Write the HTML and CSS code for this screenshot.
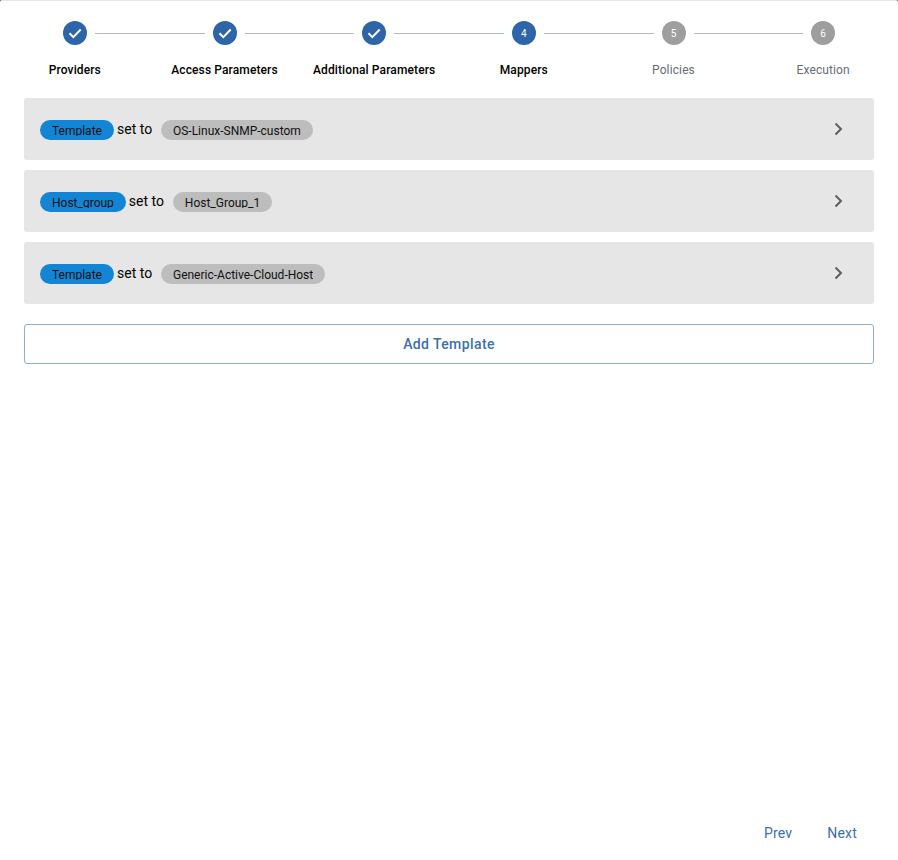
FILE: index.html
```html
<!DOCTYPE html>
<html lang="en">
<head>
<meta charset="utf-8">
<title>Wizard</title>
<link rel="stylesheet" href="styles.css">
</head>
<body>
<main class="wizard">
  <ol class="stepper">
    <li class="step done">
      <div class="track"><span class="line none"></span><span class="dot"><svg viewBox="0 0 24 24" class="check"><path d="M6.5 12.3l3.8 3.8 7.4-7.6"/></svg></span><span class="line"></span></div>
      <span class="label">Providers</span>
    </li>
    <li class="step done">
      <div class="track"><span class="line"></span><span class="dot"><svg viewBox="0 0 24 24" class="check"><path d="M6.5 12.3l3.8 3.8 7.4-7.6"/></svg></span><span class="line"></span></div>
      <span class="label">Access Parameters</span>
    </li>
    <li class="step done">
      <div class="track"><span class="line"></span><span class="dot"><svg viewBox="0 0 24 24" class="check"><path d="M6.5 12.3l3.8 3.8 7.4-7.6"/></svg></span><span class="line"></span></div>
      <span class="label">Additional Parameters</span>
    </li>
    <li class="step done">
      <div class="track"><span class="line"></span><span class="dot">4</span><span class="line"></span></div>
      <span class="label">Mappers</span>
    </li>
    <li class="step">
      <div class="track"><span class="line"></span><span class="dot">5</span><span class="line"></span></div>
      <span class="label">Policies</span>
    </li>
    <li class="step">
      <div class="track"><span class="line"></span><span class="dot">6</span><span class="line none"></span></div>
      <span class="label">Execution</span>
    </li>
  </ol>

  <section class="list">
    <div class="card">
      <div class="rule"><span class="pill key"><span class="pill-text">Template</span></span><span class="setto">set to</span><span class="pill val"><span class="pill-text">OS-Linux-SNMP-custom</span></span></div>
      <svg class="chev" viewBox="0 0 24 24"><path d="M9.5 6.5l5.5 5.5-5.5 5.5"/></svg>
    </div>
    <div class="card">
      <div class="rule"><span class="pill key"><span class="pill-text">Host_group</span></span><span class="setto">set to</span><span class="pill val"><span class="pill-text">Host_Group_1</span></span></div>
      <svg class="chev" viewBox="0 0 24 24"><path d="M9.5 6.5l5.5 5.5-5.5 5.5"/></svg>
    </div>
    <div class="card">
      <div class="rule"><span class="pill key"><span class="pill-text">Template</span></span><span class="setto">set to</span><span class="pill val"><span class="pill-text">Generic-Active-Cloud-Host</span></span></div>
      <svg class="chev" viewBox="0 0 24 24"><path d="M9.5 6.5l5.5 5.5-5.5 5.5"/></svg>
    </div>
    <button class="add">Add Template</button>
  </section>

  <footer class="nav">
    <a class="navlink">Prev</a>
    <a class="navlink">Next</a>
  </footer>
</main>
</body>
</html>
```

FILE: styles.css
```css
* { box-sizing: border-box; }
html, body { margin: 0; height: 100%; background: #2b4a6f; }
body { font-family: Roboto, "Liberation Sans", sans-serif; overflow: hidden; }

.wizard {
  height: 860px;
  display: flex;
  flex-direction: column;
  background: #fff;
  border-top: 1px solid #e3e6ea;
  border-radius: 2px 2px 0 0;
}

.stepper {
  list-style: none;
  margin: 0;
  padding: 20px 0 0;
  display: grid;
  grid-template-columns: repeat(6, 1fr);
}
.step { display: flex; flex-direction: column; align-items: center; min-width: 0; }
.track { width: 100%; display: flex; align-items: center; gap: 8px; height: 24px; }
.line { flex: 1; height: 1px; background: #b9b9b9; }
.line.none { background: transparent; }
.dot {
  flex: none;
  width: 24px;
  height: 24px;
  border-radius: 50%;
  background: #9e9e9e;
  color: #fff;
  font-size: 10px;
  line-height: 25px;
  text-align: center;
}
.step.done .dot { background: #2d65a8; }
.check { display: block; width: 24px; height: 24px; }
.check path { fill: none; stroke: #fff; stroke-width: 2; }
.label {
  margin-top: 17px;
  font-size: 12px;
  line-height: 16px;
  letter-spacing: 0.12px;
  color: #666d77;
  white-space: nowrap;
}
.step.done .label { color: #000; font-weight: 500; }

.list {
  margin-top: 20px;
  padding: 0 24px;
  display: flex;
  flex-direction: column;
  gap: 10px;
}
.card {
  height: 62px;
  background: #e6e6e6;
  border-radius: 3px;
  padding: 0 24px 0 16px;
  display: flex;
  align-items: center;
  justify-content: space-between;
}
.rule { display: flex; align-items: center; position: relative; top: 1px; }
.pill {
  height: 20px;
  padding: 0 12px;
  border-radius: 10px;
  color: #111;
  white-space: nowrap;
}
.pill-text {
  display: block;
  height: 16px;
  overflow: hidden;
  font-size: 12px;
  line-height: 22px;
}
.key { background: #1385d4; }
.val { background: #bdbdbd; }
.setto { font-size: 14px; line-height: 18px; color: #000; margin: -2px 8px 0 3px; letter-spacing: 0.02px; width: 36px; }
.chev { width: 24px; height: 24px; }
.chev path { fill: none; stroke: #5f5f5f; stroke-width: 2; }

.add {
  margin-top: 10px;
  height: 40px;
  background: #fff;
  border: 1px solid #8eaed6;
  border-radius: 3px;
  font-family: inherit;
  font-size: 14px;
  font-weight: 500;
  letter-spacing: 0.4px;
  color: #3a6fb0;
}

.nav {
  margin-top: auto;
  padding-right: 41px;
  height: 37px;
  display: flex;
  justify-content: flex-end;
  gap: 35px;
}
.navlink {
  font-size: 14px;
  line-height: 20px;
  letter-spacing: 0.2px;
  color: #3a6fb0;
}
```
